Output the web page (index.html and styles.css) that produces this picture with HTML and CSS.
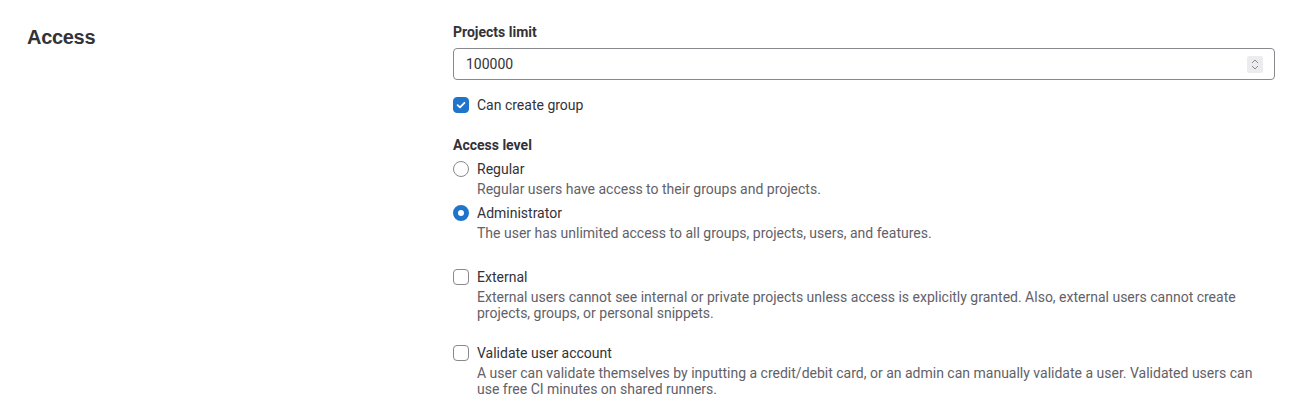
FILE: index.html
```html
<!DOCTYPE html>
<html>
<head>
<meta charset="utf-8">
<link rel="stylesheet" href="styles.css">
</head>
<body>
<div class="section">
  <div class="side">
    <h2 class="title">Access</h2>
  </div>
  <div class="main">
    <div class="field">
      <label class="label">Projects limit</label>
      <div class="input-wrap">
        <div class="input">100000</div>
        <span class="spin">
          <svg width="16" height="17" viewBox="0 0 16 17"><path d="M5 7 L8 4 L11 7" fill="none" stroke="#8a8a90" stroke-width="1"/><path d="M5 10 L8 13 L11 10" fill="none" stroke="#8a8a90" stroke-width="1"/></svg>
        </span>
      </div>
    </div>
    <div class="check-row first">
      <span class="box checked">
        <svg width="16" height="16" viewBox="0 0 16 16"><path d="M4.6 8.2 L7 10.4 L11.4 5.8" fill="none" stroke="#fff" stroke-width="1.8" stroke-linecap="round" stroke-linejoin="round"/></svg>
      </span>
      <span class="opt">Can create group</span>
    </div>
    <div class="group">
      <div class="label">Access level</div>
      <div class="check-row">
        <span class="radio"></span>
        <div>
          <div class="opt">Regular</div>
          <div class="help">Regular users have access to their groups and projects.</div>
        </div>
      </div>
      <div class="check-row r2">
        <span class="radio on"></span>
        <div>
          <div class="opt">Administrator</div>
          <div class="help">The user has unlimited access to all groups, projects, users, and features.</div>
        </div>
      </div>
      <div class="check-row r3">
        <span class="box"></span>
        <div>
          <div class="opt">External</div>
          <div class="help">External users cannot see internal or private projects unless access is explicitly granted. Also, external users cannot create projects, groups, or personal snippets.</div>
        </div>
      </div>
      <div class="check-row r4">
        <span class="box"></span>
        <div>
          <div class="opt">Validate user account</div>
          <div class="help">A user can validate themselves by inputting a credit/debit card, or an admin can manually validate a user. Validated users can use free CI minutes on shared runners.</div>
        </div>
      </div>
    </div>
  </div>
</div>
</body>
</html>
```
FILE: styles.css
```css
* { box-sizing: border-box; }
html, body { margin: 0; padding: 0; background: #fff; }
body {
  font-family: Roboto, "Noto Sans", sans-serif;
  font-size: 14px;
  color: #333238;
}
.section {
  display: flex;
  padding: 22px 22px 0 27px;
}
.side { width: 426px; flex: none; }
.title {
  margin: 3px 0 0;
  font-family: "Liberation Sans", Arial, sans-serif;
  font-size: 20px;
  font-weight: bold;
  line-height: 24px;
  letter-spacing: -0.3px;
  color: #333238;
}
.main { flex: 1; }
.label {
  display: block;
  font-weight: 700;
  line-height: 20px;
}
.field .label { margin-bottom: 6px; }
.input-wrap { position: relative; }
.input {
  height: 32px;
  border: 1px solid #89888d;
  border-radius: 4px;
  padding: 0 12px;
  line-height: 30px;
  font-size: 14px;
  color: #333238;
}
.spin {
  position: absolute;
  right: 12px;
  top: 8px;
  width: 16px;
  height: 17px;
  background: #ececef;
  border-radius: 2px;
  display: flex;
}
.check-row {
  display: flex;
  align-items: flex-start;
  gap: 8px;
}
.check-row.first { margin-top: 15px; }
.opt { line-height: 20px; }
.box {
  width: 16px; height: 16px;
  margin-top: 2px;
  flex: none;
  border: 1px solid #89888d;
  border-radius: 4px;
  display: flex;
}
.box.checked { background: #1f75cb; border-color: #1f75cb; }
.box.checked svg { margin: -1px; }
.radio {
  width: 16px; height: 16px;
  margin-top: 2px;
  flex: none;
  border: 1px solid #89888d;
  border-radius: 50%;
}
.radio.on {
  border: 5px solid #1f75cb;
  background: #fff;
}
.group { margin-top: 20px; }
.group > .label { margin-bottom: 4px; }
.help {
  color: #626168;
  line-height: 16px;
  margin-top: 2px;
}
.r2 { margin-top: 6px; }
.r3 { margin-top: 26px; }
.r4 { margin-top: 22px; }
```
